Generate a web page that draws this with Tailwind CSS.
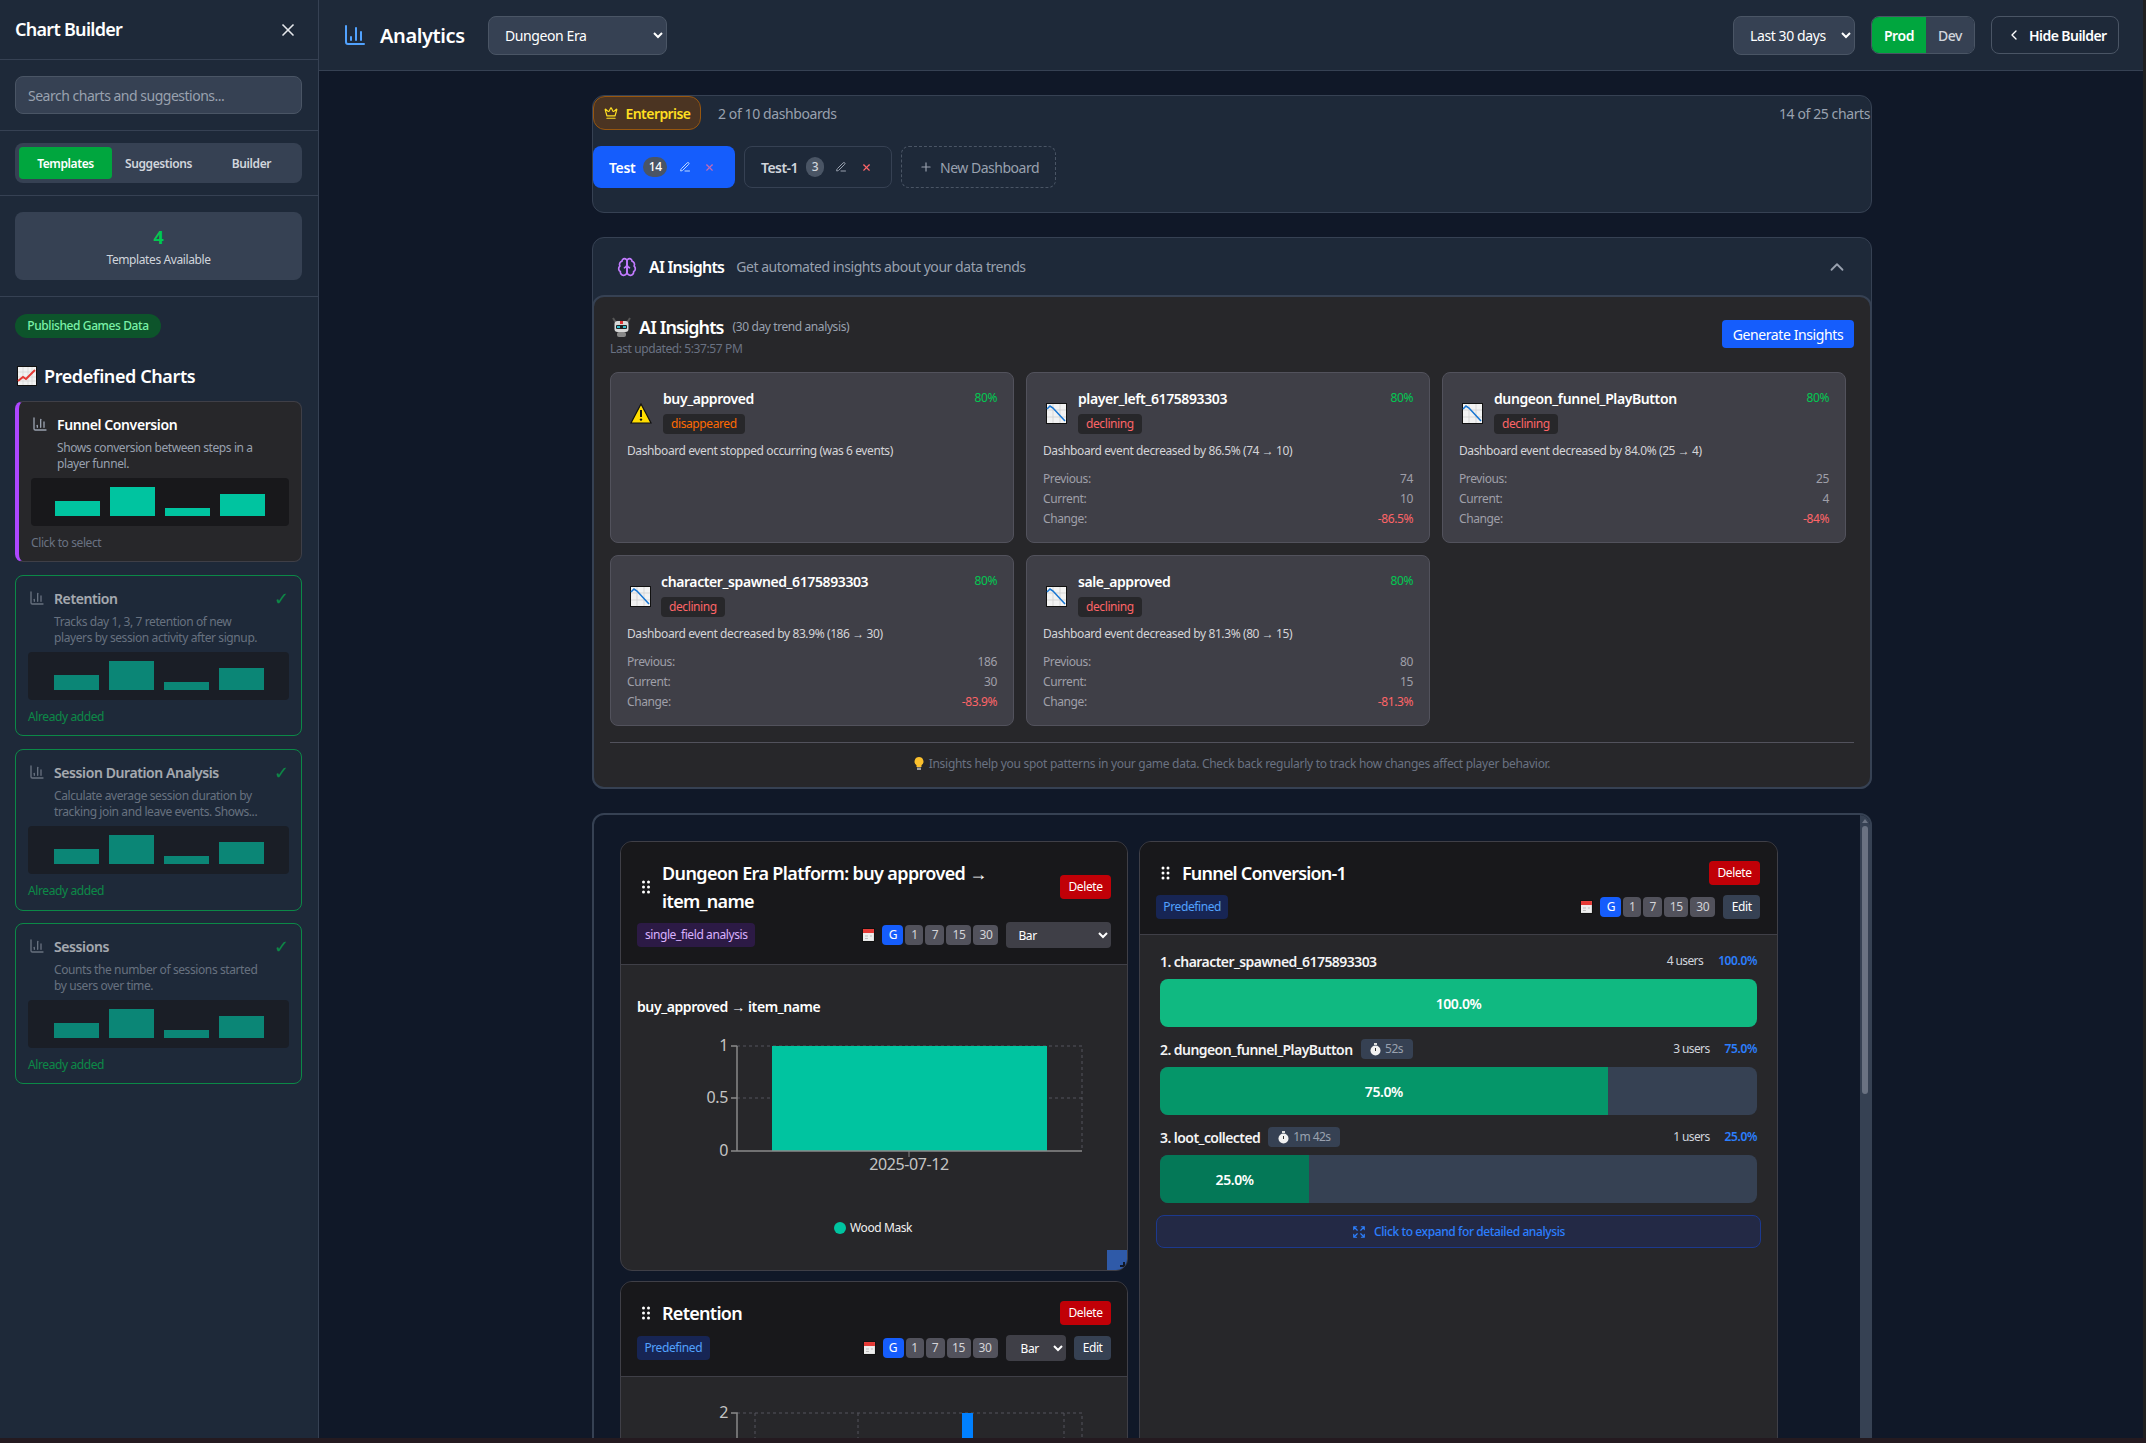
<!DOCTYPE html>
<html lang="en">
<head>
<meta charset="utf-8">
<title>Analytics</title>
<script src="https://cdn.jsdelivr.net/npm/@tailwindcss/browser@4"></script>
</head>
<body class="bg-[#241a20]">
<div class="flex flex-col w-[2146px] h-[1443px] overflow-hidden font-['Noto_Sans','Liberation_Sans',sans-serif] tracking-[-0.025em] text-white">
<div class="flex h-[1438px] overflow-hidden bg-gray-900">

<!-- SIDEBAR -->
<aside class="w-[319px] shrink-0 bg-gray-800 border-r border-gray-700 flex flex-col">
  <div class="h-[60px] shrink-0 border-b border-gray-700 flex items-center justify-between pl-[15px] pr-[20px]">
    <h2 class="text-[18px] font-semibold tracking-[-0.04em]">Chart Builder</h2>
    <svg class="w-[20px] h-[20px] text-gray-200" viewBox="0 0 24 24" fill="none" stroke="currentColor" stroke-width="2" stroke-linecap="round"><path d="M18 6 6 18"/><path d="m6 6 12 12"/></svg>
  </div>
  <div class="h-[71px] shrink-0 border-b border-gray-700 pl-[15px] pr-[16px] pt-[16px]">
    <div class="h-[38px] rounded-lg bg-gray-700 border border-gray-600 flex items-center px-[12px] text-[14px] text-gray-400 tracking-[-0.035em]">Search charts and suggestions...</div>
  </div>
  <div class="h-[65px] shrink-0 border-b border-gray-700 pl-[15px] pr-[16px] pt-[12px]">
    <div class="h-[40px] rounded-lg bg-gray-700 p-[4px] flex text-[12px] font-semibold">
      <div class="w-[93px] rounded bg-green-600 flex items-center justify-center pt-px">Templates</div>
      <div class="w-[93px] flex items-center justify-center text-gray-300 pt-px">Suggestions</div>
      <div class="w-[93px] flex items-center justify-center text-gray-300 pt-px">Builder</div>
    </div>
  </div>
  <div class="h-[101px] shrink-0 border-b border-gray-700 pl-[15px] pr-[16px] pt-[16px]">
    <div class="h-[68px] rounded-lg bg-gray-700 flex flex-col items-center justify-center">
      <div class="text-[18px] leading-[24px] font-bold text-green-500">4</div>
      <div class="mt-[3px] text-[12px] leading-[16px] text-gray-300">Templates Available</div>
    </div>
  </div>
  <div class="flex-1 pl-[15px] pr-[16px] pt-[17px]">
    <div class="flex h-[24px] w-[146px] items-center justify-center rounded-full bg-green-900 text-green-300 text-[12px] font-medium">Published Games Data</div>
    <div class="mt-[24px] h-[28px] flex items-center gap-[7px] text-[18px] font-semibold">
      <svg class="ml-[2px] w-[20px] h-[20px]" viewBox="0 0 20 20"><rect width="20" height="20" fill="#111"/><rect x="1" y="1" width="18" height="18" fill="#f2f2f2"/><path d="M1 6h18M1 11h18M1 15h18M6 1v18M11 1v18M15 1v18" stroke="#d0d0d0" stroke-width=".6"/><path d="M1 15l5-4 3 2 9-9" stroke="#e53935" stroke-width="2" fill="none"/></svg>
      <span>Predefined Charts</span>
    </div>

    <div class="mt-[11px] h-[161px] rounded-lg bg-zinc-800 border border-zinc-700 border-l-4 border-l-purple-500 p-[12px]">
      <div class="flex items-center gap-[9px] h-[20px]">
        <svg class="w-[16px] h-[16px] ml-px text-gray-400" viewBox="0 0 24 24" fill="none" stroke="currentColor" stroke-width="2" stroke-linecap="round"><path d="M3 3v16a2 2 0 0 0 2 2h16"/><path d="M18 17V9"/><path d="M13 17V5"/><path d="M8 17v-3"/></svg>
        <span class="text-[14px] font-semibold">Funnel Conversion</span>
      </div>
      <p class="ml-[26px] mt-[6px] text-[12px] leading-[16px] text-gray-400">Shows conversion between steps in a<br>player funnel.</p>
      <div class="mt-[6px] h-[48px] rounded bg-zinc-900 flex items-end justify-center gap-[10px] pb-[10px]">
        <div class="w-[45px] h-[15px] bg-[#00c4a0]"></div><div class="w-[45px] h-[29px] bg-[#00c4a0]"></div><div class="w-[45px] h-[8px] bg-[#00c4a0]"></div><div class="w-[45px] h-[22px] bg-[#00c4a0]"></div>
      </div>
      <p class="mt-[9px] text-[12px] leading-[16px] text-gray-500">Click to select</p>
    </div>

    <div class="mt-[13px] h-[161px] rounded-lg border border-green-500 p-[12px] opacity-60">
      <div class="flex items-center gap-[9px] h-[20px]">
        <svg class="w-[16px] h-[16px] ml-px text-gray-400" viewBox="0 0 24 24" fill="none" stroke="currentColor" stroke-width="2" stroke-linecap="round"><path d="M3 3v16a2 2 0 0 0 2 2h16"/><path d="M18 17V9"/><path d="M13 17V5"/><path d="M8 17v-3"/></svg>
        <span class="text-[14px] font-semibold flex-1">Retention</span>
        <span class="text-[18px] leading-[20px] text-green-500">✓</span>
      </div>
      <p class="ml-[26px] mt-[6px] text-[12px] leading-[16px] text-gray-400">Tracks day 1, 3, 7 retention of new<br>players by session activity after signup.</p>
      <div class="mt-[6px] h-[48px] rounded bg-zinc-900 flex items-end justify-center gap-[10px] pb-[10px]">
        <div class="w-[45px] h-[15px] bg-[#00c4a0]"></div><div class="w-[45px] h-[29px] bg-[#00c4a0]"></div><div class="w-[45px] h-[8px] bg-[#00c4a0]"></div><div class="w-[45px] h-[22px] bg-[#00c4a0]"></div>
      </div>
      <p class="mt-[9px] text-[12px] leading-[16px] text-green-500">Already added</p>
    </div>

    <div class="mt-[13px] h-[162px] rounded-lg border border-green-500 p-[12px] opacity-60">
      <div class="flex items-center gap-[9px] h-[20px]">
        <svg class="w-[16px] h-[16px] ml-px text-gray-400" viewBox="0 0 24 24" fill="none" stroke="currentColor" stroke-width="2" stroke-linecap="round"><path d="M3 3v16a2 2 0 0 0 2 2h16"/><path d="M18 17V9"/><path d="M13 17V5"/><path d="M8 17v-3"/></svg>
        <span class="text-[14px] font-semibold flex-1">Session Duration Analysis</span>
        <span class="text-[18px] leading-[20px] text-green-500">✓</span>
      </div>
      <p class="ml-[26px] mt-[6px] text-[12px] leading-[16px] text-gray-400">Calculate average session duration by<br>tracking join and leave events. Shows...</p>
      <div class="mt-[6px] h-[48px] rounded bg-zinc-900 flex items-end justify-center gap-[10px] pb-[10px]">
        <div class="w-[45px] h-[15px] bg-[#00c4a0]"></div><div class="w-[45px] h-[29px] bg-[#00c4a0]"></div><div class="w-[45px] h-[8px] bg-[#00c4a0]"></div><div class="w-[45px] h-[22px] bg-[#00c4a0]"></div>
      </div>
      <p class="mt-[9px] text-[12px] leading-[16px] text-green-500">Already added</p>
    </div>

    <div class="mt-[12px] h-[161px] rounded-lg border border-green-500 p-[12px] opacity-60">
      <div class="flex items-center gap-[9px] h-[20px]">
        <svg class="w-[16px] h-[16px] ml-px text-gray-400" viewBox="0 0 24 24" fill="none" stroke="currentColor" stroke-width="2" stroke-linecap="round"><path d="M3 3v16a2 2 0 0 0 2 2h16"/><path d="M18 17V9"/><path d="M13 17V5"/><path d="M8 17v-3"/></svg>
        <span class="text-[14px] font-semibold flex-1">Sessions</span>
        <span class="text-[18px] leading-[20px] text-green-500">✓</span>
      </div>
      <p class="ml-[26px] mt-[6px] text-[12px] leading-[16px] text-gray-400">Counts the number of sessions started<br>by users over time.</p>
      <div class="mt-[6px] h-[48px] rounded bg-zinc-900 flex items-end justify-center gap-[10px] pb-[10px]">
        <div class="w-[45px] h-[15px] bg-[#00c4a0]"></div><div class="w-[45px] h-[29px] bg-[#00c4a0]"></div><div class="w-[45px] h-[8px] bg-[#00c4a0]"></div><div class="w-[45px] h-[22px] bg-[#00c4a0]"></div>
      </div>
      <p class="mt-[9px] text-[12px] leading-[16px] text-green-500">Already added</p>
    </div>
  </div>
</aside>

<!-- MAIN -->
<main class="w-[1824px] shrink-0 flex flex-col overflow-hidden">
  <header class="h-[71px] shrink-0 bg-gray-800 border-b border-gray-700 flex items-center justify-between pl-[26px] pr-[24px]">
    <div class="flex items-center">
      <svg class="w-[24px] h-[24px] text-blue-400 -ml-[2px]" viewBox="0 0 24 24" fill="none" stroke="currentColor" stroke-width="2" stroke-linecap="round"><path d="M3 3v16a2 2 0 0 0 2 2h16"/><path d="M18 17V9"/><path d="M13 17V5"/><path d="M8 17v-3"/></svg>
      <h1 class="ml-[13px] pt-[2px] text-[20px] font-semibold w-[108px]">Analytics</h1>
      <select class="h-[39px] w-[179px] rounded-lg bg-gray-700 border border-gray-600 px-[12px] text-[14px] text-white"><option>Dungeon Era</option></select>
    </div>
    <div class="flex items-center">
      <select class="h-[39px] w-[122px] rounded-lg bg-gray-700 border border-gray-600 px-[12px] text-[14px] text-white"><option>Last 30 days</option></select>
      <div class="ml-[16px] h-[38px] w-[104px] rounded-lg overflow-hidden border border-gray-600 flex text-[14px]">
        <div class="w-[54px] bg-green-600 flex items-center justify-center font-semibold">Prod</div>
        <div class="flex-1 bg-gray-700 text-gray-300 flex items-center justify-center font-medium">Dev</div>
      </div>
      <div class="ml-[16px] h-[38px] w-[128px] rounded-lg border border-gray-600 flex items-center pl-[14px] gap-[7px] text-[14px] font-semibold tracking-[-0.04em]">
        <svg class="w-[16px] h-[16px]" viewBox="0 0 24 24" fill="none" stroke="currentColor" stroke-width="2" stroke-linecap="round" stroke-linejoin="round"><path d="m15 18-6-6 6-6"/></svg>
        <span>Hide Builder</span>
      </div>
    </div>
  </header>

  <div class="flex-1 overflow-hidden flex">
  <div class="w-[1821px] shrink-0 pt-[24px] pl-[273px]">
  <div class="w-[1280px]">

    <!-- dashboards -->
    <section class="h-[118px] rounded-xl bg-gray-800 border border-gray-700">
      <div class="flex items-center justify-between h-[34px] pr-[1px]">
        <div class="flex items-center">
          <div class="h-[34px] w-[108px] rounded-xl bg-[#4b3422] border border-[#97560f] flex items-center justify-center gap-[8px] text-[14px] font-semibold text-yellow-300 tracking-[-0.04em]">
            <svg class="w-[14px] h-[14px]" viewBox="0 0 24 24" fill="none" stroke="currentColor" stroke-width="2" stroke-linecap="round" stroke-linejoin="round"><path d="M11.562 3.266a.5.5 0 0 1 .876 0L15.39 8.87a1 1 0 0 0 1.516.294L21.183 5.5a.5.5 0 0 1 .798.519l-2.834 10.246a1 1 0 0 1-.956.734H5.81a1 1 0 0 1-.957-.734L2.02 6.02a.5.5 0 0 1 .798-.519l4.276 3.664a1 1 0 0 0 1.516-.294z"/><path d="M5 21h14"/></svg>
            <span>Enterprise</span>
          </div>
          <span class="ml-[17px] text-[14px] text-gray-400">2 of 10 dashboards</span>
        </div>
        <span class="text-[14px] text-gray-400">14 of 25 charts</span>
      </div>
      <div class="mt-[16px] flex gap-[9px] text-[14px] font-medium">
        <div class="h-[42px] w-[142px] rounded-lg bg-blue-600 flex items-center pl-[16px]">
          <span class="font-semibold">Test</span>
          <span class="ml-[8px] h-[20px] w-[24px] rounded-full bg-gray-600 flex items-center justify-center text-[12px]">14</span>
          <svg class="ml-[12px] w-[12px] h-[12px] text-blue-200" viewBox="0 0 24 24" fill="none" stroke="currentColor" stroke-width="2" stroke-linecap="round" stroke-linejoin="round"><path d="M12 20h9"/><path d="M16.376 3.622a1 1 0 0 1 3.002 3.002L7.368 18.635a2 2 0 0 1-.855.506l-2.872.838a.5.5 0 0 1-.62-.62l.838-2.872a2 2 0 0 1 .506-.854z"/></svg>
          <svg class="ml-[13px] w-[11px] h-[11px] text-[#c56bb5]" viewBox="0 0 24 24" fill="none" stroke="currentColor" stroke-width="2.5" stroke-linecap="round"><path d="M18 6 6 18"/><path d="m6 6 12 12"/></svg>
        </div>
        <div class="h-[42px] w-[148px] rounded-lg border border-gray-700 flex items-center pl-[16px] text-gray-300">
          <span class="font-semibold tracking-[-0.04em]">Test-1</span>
          <span class="ml-[8px] h-[20px] w-[18px] rounded-full bg-gray-600 flex items-center justify-center text-[12px]">3</span>
          <svg class="ml-[11px] w-[12px] h-[12px] text-gray-400" viewBox="0 0 24 24" fill="none" stroke="currentColor" stroke-width="2" stroke-linecap="round" stroke-linejoin="round"><path d="M12 20h9"/><path d="M16.376 3.622a1 1 0 0 1 3.002 3.002L7.368 18.635a2 2 0 0 1-.855.506l-2.872.838a.5.5 0 0 1-.62-.62l.838-2.872a2 2 0 0 1 .506-.854z"/></svg>
          <svg class="ml-[14px] w-[11px] h-[11px] text-red-400" viewBox="0 0 24 24" fill="none" stroke="currentColor" stroke-width="2.5" stroke-linecap="round"><path d="M18 6 6 18"/><path d="m6 6 12 12"/></svg>
        </div>
        <div class="h-[42px] w-[155px] rounded-lg border border-dashed border-gray-600 flex items-center pl-[17px] gap-[7px] text-gray-400 font-normal tracking-[-0.035em]">
          <svg class="w-[14px] h-[14px]" viewBox="0 0 24 24" fill="none" stroke="currentColor" stroke-width="2" stroke-linecap="round"><path d="M5 12h14"/><path d="M12 5v14"/></svg>
          <span>New Dashboard</span>
        </div>
      </div>
    </section>

    <!-- AI insights -->
    <section class="mt-[24px] rounded-xl bg-gray-800 border border-gray-700">
      <div class="h-[57px] flex items-center pl-[24px] pr-[23px]">
        <svg class="w-[20px] h-[20px] text-purple-400" viewBox="0 0 24 24" fill="none" stroke="currentColor" stroke-width="2" stroke-linecap="round" stroke-linejoin="round"><path d="M12 5a3 3 0 1 0-5.997.125 4 4 0 0 0-2.526 5.77 4 4 0 0 0 .556 6.588A4 4 0 1 0 12 18Z"/><path d="M12 5a3 3 0 1 1 5.997.125 4 4 0 0 1 2.526 5.77 4 4 0 0 1-.556 6.588A4 4 0 1 1 12 18Z"/><path d="M15 13a4.5 4.5 0 0 1-3-4 4.5 4.5 0 0 1-3 4"/><path d="M12 18v-9"/></svg>
        <span class="ml-[12px] text-[16px] font-semibold tracking-[-0.05em]">AI Insights</span>
        <span class="ml-[12px] text-[14px] text-gray-400 flex-1 tracking-[-0.032em]">Get automated insights about your data trends</span>
        <svg class="w-[22px] h-[22px] text-gray-400" viewBox="0 0 24 24" fill="none" stroke="currentColor" stroke-width="2" stroke-linecap="round" stroke-linejoin="round"><path d="m18 15-6-6-6 6"/></svg>
      </div>
      <div class="-mx-px -mb-px rounded-xl bg-zinc-800 border-2 border-gray-700 h-[494px] pt-[16px] px-[16px]">
        <div class="flex justify-between items-start h-[44px]">
          <div>
            <div class="flex items-center h-[28px]">
              <svg class="ml-[1px] w-[21px] h-[21px]" viewBox="0 0 21 21"><path d="M2 1l2.5 4M19 1l-2.500 4" stroke="#555" stroke-width="2"/><rect x="3.5" y="4" width="14" height="11" rx="3" fill="#d8d8d8"/><rect x="9" y="4" width="3" height="3" fill="#d33"/><rect x="5" y="8" width="11" height="4" rx="1" fill="#222"/><rect x="6" y="9" width="3" height="2" fill="#3bc"/><rect x="12" y="9" width="3" height="2" fill="#3bc"/><rect x="6" y="15" width="9" height="5" rx="2" fill="#888"/></svg>
              <span class="ml-[7px] text-[18px] font-semibold tracking-[-0.05em]">AI Insights</span>
              <span class="ml-[9px] text-[12px] text-gray-400">(30 day trend analysis)</span>
            </div>
            <div class="text-[12px] leading-[16px] text-gray-500">Last updated: 5:37:57 PM</div>
          </div>
          <div class="mt-[7px] h-[28px] w-[132px] rounded bg-blue-600 flex items-center justify-center text-[14px] font-normal">Generate Insights</div>
        </div>

        <div class="mt-[15px] pr-[8px] grid grid-cols-3 gap-[12px]">

          <div class="h-[171px] rounded-lg bg-zinc-700 border border-zinc-600 p-[16px]">
            <div class="flex items-start">
              <svg class="mt-[14px] ml-[3px] w-[22px] h-[21px] shrink-0" viewBox="0 0 22 21"><path d="M11 1 21 20H1Z" fill="#ffdd00" stroke="#111" stroke-width="1.2"/><path d="M11 7v7" stroke="#111" stroke-width="2"/><circle cx="11" cy="16.6" r="1.2" fill="#111"/></svg>
              <div class="ml-[11px] flex-1">
                <div class="text-[14px] leading-[20px] font-semibold">buy_approved</div>
                <div class="mt-[5px] flex w-fit h-[20px] items-center rounded bg-zinc-800 px-[8px] text-[12px] text-orange-500">disappeared</div>
              </div>
              <span class="mt-px text-[12px] leading-[16px] text-green-500">80%</span>
            </div>
            <p class="mt-[9px] text-[12px] leading-[16px] text-zinc-300">Dashboard event stopped occurring (was 6 events)</p>
          </div>

          <div class="h-[171px] rounded-lg bg-zinc-700 border border-zinc-600 p-[16px]">
            <div class="flex items-start">
              <svg class="mt-[14px] ml-[3px] w-[21px] h-[21px] shrink-0" viewBox="0 0 21 21"><rect width="21" height="21" fill="#111"/><rect x="1" y="1" width="19" height="19" fill="#f2f2f2"/><path d="M1 7h19M1 14h19M7 1v19M14 1v19" stroke="#cfcfcf" stroke-width=".7"/><path d="M1 6l3-3 3 2 12 13" stroke="#1976d2" stroke-width="1.6" fill="none"/></svg>
              <div class="ml-[11px] flex-1">
                <div class="text-[14px] leading-[20px] font-semibold">player_left_6175893303</div>
                <div class="mt-[5px] flex w-fit h-[20px] items-center rounded bg-zinc-800 px-[8px] text-[12px] text-red-400">declining</div>
              </div>
              <span class="mt-px text-[12px] leading-[16px] text-green-500">80%</span>
            </div>
            <p class="mt-[9px] text-[12px] leading-[16px] text-zinc-300">Dashboard event decreased by 86.5% (74 → 10)</p>
            <div class="mt-[10px] text-[12px] leading-[20px] text-zinc-400">
              <div class="flex justify-between"><span>Previous:</span><span>74</span></div>
              <div class="flex justify-between"><span>Current:</span><span>10</span></div>
              <div class="flex justify-between"><span>Change:</span><span class="text-red-400">-86.5%</span></div>
            </div>
          </div>

          <div class="h-[171px] rounded-lg bg-zinc-700 border border-zinc-600 p-[16px]">
            <div class="flex items-start">
              <svg class="mt-[14px] ml-[3px] w-[21px] h-[21px] shrink-0" viewBox="0 0 21 21"><rect width="21" height="21" fill="#111"/><rect x="1" y="1" width="19" height="19" fill="#f2f2f2"/><path d="M1 7h19M1 14h19M7 1v19M14 1v19" stroke="#cfcfcf" stroke-width=".7"/><path d="M1 6l3-3 3 2 12 13" stroke="#1976d2" stroke-width="1.6" fill="none"/></svg>
              <div class="ml-[11px] flex-1">
                <div class="text-[14px] leading-[20px] font-semibold">dungeon_funnel_PlayButton</div>
                <div class="mt-[5px] flex w-fit h-[20px] items-center rounded bg-zinc-800 px-[8px] text-[12px] text-red-400">declining</div>
              </div>
              <span class="mt-px text-[12px] leading-[16px] text-green-500">80%</span>
            </div>
            <p class="mt-[9px] text-[12px] leading-[16px] text-zinc-300">Dashboard event decreased by 84.0% (25 → 4)</p>
            <div class="mt-[10px] text-[12px] leading-[20px] text-zinc-400">
              <div class="flex justify-between"><span>Previous:</span><span>25</span></div>
              <div class="flex justify-between"><span>Current:</span><span>4</span></div>
              <div class="flex justify-between"><span>Change:</span><span class="text-red-400">-84%</span></div>
            </div>
          </div>

          <div class="h-[171px] rounded-lg bg-zinc-700 border border-zinc-600 p-[16px]">
            <div class="flex items-start">
              <svg class="mt-[14px] ml-[3px] w-[21px] h-[21px] shrink-0" viewBox="0 0 21 21"><rect width="21" height="21" fill="#111"/><rect x="1" y="1" width="19" height="19" fill="#f2f2f2"/><path d="M1 7h19M1 14h19M7 1v19M14 1v19" stroke="#cfcfcf" stroke-width=".7"/><path d="M1 6l3-3 3 2 12 13" stroke="#1976d2" stroke-width="1.6" fill="none"/></svg>
              <div class="ml-[10px] flex-1">
                <div class="text-[14px] leading-[20px] font-semibold">character_spawned_6175893303</div>
                <div class="mt-[5px] flex w-fit h-[20px] items-center rounded bg-zinc-800 px-[8px] text-[12px] text-red-400">declining</div>
              </div>
              <span class="mt-px text-[12px] leading-[16px] text-green-500">80%</span>
            </div>
            <p class="mt-[9px] text-[12px] leading-[16px] text-zinc-300">Dashboard event decreased by 83.9% (186 → 30)</p>
            <div class="mt-[10px] text-[12px] leading-[20px] text-zinc-400">
              <div class="flex justify-between"><span>Previous:</span><span>186</span></div>
              <div class="flex justify-between"><span>Current:</span><span>30</span></div>
              <div class="flex justify-between"><span>Change:</span><span class="text-red-400">-83.9%</span></div>
            </div>
          </div>

          <div class="h-[171px] rounded-lg bg-zinc-700 border border-zinc-600 p-[16px]">
            <div class="flex items-start">
              <svg class="mt-[14px] ml-[3px] w-[21px] h-[21px] shrink-0" viewBox="0 0 21 21"><rect width="21" height="21" fill="#111"/><rect x="1" y="1" width="19" height="19" fill="#f2f2f2"/><path d="M1 7h19M1 14h19M7 1v19M14 1v19" stroke="#cfcfcf" stroke-width=".7"/><path d="M1 6l3-3 3 2 12 13" stroke="#1976d2" stroke-width="1.6" fill="none"/></svg>
              <div class="ml-[11px] flex-1">
                <div class="text-[14px] leading-[20px] font-semibold">sale_approved</div>
                <div class="mt-[5px] flex w-fit h-[20px] items-center rounded bg-zinc-800 px-[8px] text-[12px] text-red-400">declining</div>
              </div>
              <span class="mt-px text-[12px] leading-[16px] text-green-500">80%</span>
            </div>
            <p class="mt-[9px] text-[12px] leading-[16px] text-zinc-300">Dashboard event decreased by 81.3% (80 → 15)</p>
            <div class="mt-[10px] text-[12px] leading-[20px] text-zinc-400">
              <div class="flex justify-between"><span>Previous:</span><span>80</span></div>
              <div class="flex justify-between"><span>Current:</span><span>15</span></div>
              <div class="flex justify-between"><span>Change:</span><span class="text-red-400">-81.3%</span></div>
            </div>
          </div>
        </div>

        <div class="mt-[16px] border-t border-zinc-600 pt-[13px] flex items-center justify-center gap-[5px] text-[12px] leading-[16px] text-gray-500 tracking-[-0.024em]">
          <svg class="w-[10px] h-[14px]" viewBox="0 0 10 14"><path d="M5 0a4.5 4.5 0 0 0-2.5 8.2V10h5V8.2A4.5 4.5 0 0 0 5 0Z" fill="#fbc02d"/><rect x="3" y="10.5" width="4" height="2.5" fill="#9e9e9e"/></svg>
          <span>Insights help you spot patterns in your game data. Check back regularly to track how changes affect player behavior.</span>
        </div>
      </div>
    </section>

    <!-- chart grid -->
    <section class="mt-[24px] relative h-[640px] rounded-t-xl border-2 border-gray-700 overflow-hidden pl-[26px] pt-[26px] flex gap-[11px]">
      <!-- scrollbar -->
      <div class="absolute top-0 right-0 w-[10px] h-full bg-gray-700">
        <div class="mx-auto mt-[4px] w-0 h-0 border-x-[3px] border-x-transparent border-b-[4px] border-b-gray-500"></div>
        <div class="mx-auto mt-[3px] w-[6px] h-[268px] rounded-sm bg-gray-500"></div>
      </div>

      <div class="w-[508px] shrink-0 flex flex-col gap-[10px]">
        <!-- card A -->
        <article class="h-[430px] shrink-0 relative rounded-xl border border-zinc-700 bg-zinc-800 overflow-hidden">
          <div class="h-[123px] bg-zinc-900 border-b border-zinc-700 px-[16px] pt-[16px]">
            <div class="flex items-center justify-between h-[57px]">
              <div class="flex items-center">
                <svg class="w-[25px] h-[14px] shrink-0 text-white" viewBox="0 0 25 14" fill="currentColor"><circle cx="6.5" cy="2" r="1.5"/><circle cx="11.5" cy="2" r="1.5"/><circle cx="6.5" cy="7" r="1.5"/><circle cx="11.5" cy="7" r="1.5"/><circle cx="6.5" cy="12" r="1.5"/><circle cx="11.5" cy="12" r="1.5"/></svg>
                <h3 class="w-[360px] text-[18px] leading-[28px] font-semibold tracking-[-0.035em]">Dungeon Era Platform: buy approved → item_name</h3>
              </div>
              <button class="h-[24px] w-[51px] rounded bg-red-700 text-[12px]">Delete</button>
            </div>
            <div class="mt-[7px] flex items-center h-[26px]">
              <span class="h-[24px] w-[119px] rounded bg-[#2c1a45] text-purple-300 text-[12px] flex items-center justify-center">single_field analysis</span>
              <svg class="ml-[107px] w-[13px] h-[14px]" viewBox="0 0 13 14"><rect width="13" height="14" fill="#111"/><rect x="1" y="1" width="11" height="12" fill="#eee"/><rect x="1" y="1" width="11" height="4" fill="#e53935"/><path d="M3 8h3M8 8h2M3 10.500h3" stroke="#bbb"/></svg>
              <div class="ml-[7px] flex gap-[2px] text-[12px] text-zinc-300">
                <span class="h-[20px] w-[21px] rounded bg-blue-600 text-white flex items-center justify-center">G</span>
                <span class="h-[20px] w-[18px] rounded bg-zinc-600 flex items-center justify-center">1</span>
                <span class="h-[20px] w-[19px] rounded bg-zinc-600 flex items-center justify-center">7</span>
                <span class="h-[20px] w-[25px] rounded bg-zinc-600 flex items-center justify-center">15</span>
                <span class="h-[20px] w-[25px] rounded bg-zinc-600 flex items-center justify-center">30</span>
              </div>
              <select class="ml-[8px] h-[26px] w-[105px] rounded bg-zinc-700 px-[8px] text-[12px] text-white"><option>Bar</option></select>
            </div>
          </div>
          <div class="px-[16px] pt-[32px] text-[14px] leading-[20px] font-semibold">buy_approved → item_name</div>
          <svg class="absolute left-0 top-[183px]" width="506" height="240" viewBox="0 0 506 240">
            <path d="M116 21H461V126M116 73H461" fill="none" stroke="#55555c" stroke-dasharray="3 3"/>
            <rect x="151" y="21" width="275" height="105" fill="#00c4a0"/>
            <path d="M116 21V126H461M110 21H116M110 73H116M110 126H116" fill="none" stroke="#8a8a8a" stroke-width="1.500"/>
            <path d="M288 126V132" stroke="#8a8a8a"/>
            <g fill="#c4c4c4" font-size="16" font-family="Noto Sans, sans-serif">
              <text x="107" y="26" text-anchor="end">1</text>
              <text x="107" y="78" text-anchor="end">0.5</text>
              <text x="107" y="131" text-anchor="end">0</text>
              <text x="288" y="145" text-anchor="middle">2025-07-12</text>
            </g>
            <circle cx="219" cy="203" r="6" fill="#00c4a0"/>
            <text x="229" y="207" fill="#f0f0f0" font-size="12" font-family="Noto Sans, sans-serif">Wood Mask</text>
          </svg>
          <div class="absolute right-0 bottom-0 w-[20px] h-[20px] bg-[#2f5aa8]">
            <div class="absolute right-[2px] bottom-[3px] w-[5px] h-[5px] border-r-2 border-b-2 border-gray-900"></div>
          </div>
        </article>

        <!-- card B -->
        <article class="h-[400px] shrink-0 relative rounded-xl border border-zinc-700 bg-zinc-800 overflow-hidden">
          <div class="h-[95px] bg-zinc-900 border-b border-zinc-700 px-[16px] pt-[17px]">
            <div class="flex items-center justify-between h-[28px]">
              <div class="flex items-center">
                <svg class="w-[25px] h-[14px] shrink-0 text-white" viewBox="0 0 25 14" fill="currentColor"><circle cx="6.5" cy="2" r="1.5"/><circle cx="11.5" cy="2" r="1.5"/><circle cx="6.5" cy="7" r="1.5"/><circle cx="11.5" cy="7" r="1.5"/><circle cx="6.5" cy="12" r="1.5"/><circle cx="11.5" cy="12" r="1.5"/></svg>
                <h3 class="text-[18px] leading-[28px] font-semibold tracking-[-0.04em]">Retention</h3>
              </div>
              <button class="h-[24px] w-[51px] rounded bg-red-700 text-[12px]">Delete</button>
            </div>
            <div class="mt-[8px] flex items-center h-[26px]">
              <span class="h-[24px] w-[73px] rounded bg-[#172554] text-blue-400 text-[12px] flex items-center justify-center">Predefined</span>
              <svg class="ml-[153px] w-[13px] h-[14px]" viewBox="0 0 13 14"><rect width="13" height="14" fill="#111"/><rect x="1" y="1" width="11" height="12" fill="#eee"/><rect x="1" y="1" width="11" height="4" fill="#e53935"/><path d="M3 8h3M8 8h2M3 10.500h3" stroke="#bbb"/></svg>
              <div class="ml-[7px] flex gap-[2px] text-[12px] text-zinc-300">
                <span class="h-[20px] w-[21px] rounded bg-blue-600 text-white flex items-center justify-center">G</span>
                <span class="h-[20px] w-[18px] rounded bg-zinc-600 flex items-center justify-center">1</span>
                <span class="h-[20px] w-[19px] rounded bg-zinc-600 flex items-center justify-center">7</span>
                <span class="h-[20px] w-[24px] rounded bg-zinc-600 flex items-center justify-center">15</span>
                <span class="h-[20px] w-[25px] rounded bg-zinc-600 flex items-center justify-center">30</span>
              </div>
              <select class="ml-[8px] h-[26px] w-[61px] rounded bg-zinc-700 pl-[11px] text-[12px] text-white"><option>Bar</option></select>
              <span class="ml-[8px] h-[24px] w-[37px] rounded bg-gray-700 text-[12px] flex items-center justify-center">Edit</span>
            </div>
          </div>
          <svg class="absolute left-0 top-[110px]" width="506" height="100" viewBox="0 0 506 100">
            <path d="M116 21H461V100M134 21V100M237 21V100M443 21V100M116 60H461" fill="none" stroke="#55555c" stroke-dasharray="3 3"/>
            <rect x="341" y="21" width="11" height="79" fill="#0080ff"/>
            <path d="M110 21H116V100" fill="none" stroke="#8a8a8a" stroke-width="1.500"/>
            <text x="107" y="26" text-anchor="end" fill="#c4c4c4" font-size="16" font-family="Noto Sans, sans-serif">2</text>
          </svg>
        </article>
      </div>

      <!-- card C -->
      <article class="w-[639px] h-[640px] shrink-0 rounded-xl border border-zinc-700 bg-zinc-800 overflow-hidden">
        <div class="h-[93px] bg-zinc-900 border-b border-zinc-700 px-[16px] pt-[17px]">
          <div class="flex items-center justify-between h-[28px] pr-px">
            <div class="flex items-center">
              <svg class="w-[26px] h-[14px] shrink-0 text-white" viewBox="0 0 25 14" fill="currentColor"><circle cx="6.5" cy="2" r="1.5"/><circle cx="11.5" cy="2" r="1.5"/><circle cx="6.5" cy="7" r="1.5"/><circle cx="11.5" cy="7" r="1.5"/><circle cx="6.5" cy="12" r="1.5"/><circle cx="11.5" cy="12" r="1.5"/></svg>
              <h3 class="text-[18px] leading-[28px] font-semibold tracking-[-0.045em]">Funnel Conversion-1</h3>
            </div>
            <button class="h-[24px] w-[51px] rounded bg-red-700 text-[12px]">Delete</button>
          </div>
          <div class="mt-[8px] flex items-center h-[24px] pr-px">
            <span class="h-[24px] w-[73px] rounded bg-[#172554] text-blue-400 text-[12px] flex items-center justify-center">Predefined</span>
            <svg class="ml-[352px] w-[13px] h-[14px]" viewBox="0 0 13 14"><rect width="13" height="14" fill="#111"/><rect x="1" y="1" width="11" height="12" fill="#eee"/><rect x="1" y="1" width="11" height="4" fill="#e53935"/><path d="M3 8h3M8 8h2M3 10.500h3" stroke="#bbb"/></svg>
            <div class="ml-[7px] flex gap-[2px] text-[12px] text-zinc-300">
              <span class="h-[20px] w-[21px] rounded bg-blue-600 text-white flex items-center justify-center">G</span>
              <span class="h-[20px] w-[18px] rounded bg-zinc-600 flex items-center justify-center">1</span>
              <span class="h-[20px] w-[19px] rounded bg-zinc-600 flex items-center justify-center">7</span>
              <span class="h-[20px] w-[24px] rounded bg-zinc-600 flex items-center justify-center">15</span>
              <span class="h-[20px] w-[25px] rounded bg-zinc-600 flex items-center justify-center">30</span>
            </div>
            <span class="ml-[8px] h-[24px] w-[37px] rounded bg-gray-700 text-[12px] flex items-center justify-center">Edit</span>
          </div>
        </div>
        <div class="pl-[20px] pr-[20px] pt-[16px]">
          <div class="h-[20px] flex items-center justify-between">
            <span class="text-[14px] font-semibold tracking-[-0.04em] text-zinc-100">1. character_spawned_6175893303</span>
            <span class="flex items-center text-[12px]"><span class="text-gray-300 tracking-[-0.05em]">4 users</span><span class="ml-[15px] font-semibold text-blue-500">100.0%</span></span>
          </div>
          <div class="mt-[8px] h-[48px] rounded-lg bg-gray-700 overflow-hidden">
            <div class="h-full w-full bg-[#10b981] flex items-center justify-center text-[14px] font-semibold">100.0%</div>
          </div>
          <div class="mt-[12px] h-[20px] flex items-center justify-between">
            <span class="flex items-center text-[14px] font-semibold tracking-[-0.04em] text-zinc-100">2. dungeon_funnel_PlayButton
              <span class="ml-[8px] h-[20px] w-[52px] rounded bg-gray-700 text-[12px] font-normal text-gray-400 flex items-center justify-center gap-[4px]"><svg class="w-[11px] h-[13px]" viewBox="0 0 11 13"><rect x="4" y="0" width="3" height="2" fill="#ddd"/><circle cx="5.500" cy="7.500" r="5" fill="#f2f2f2"/><path d="M5.500 5v3" stroke="#333"/></svg>52s</span>
            </span>
            <span class="flex items-center text-[12px]"><span class="text-gray-300 tracking-[-0.05em]">3 users</span><span class="ml-[15px] font-semibold text-blue-500">75.0%</span></span>
          </div>
          <div class="mt-[8px] h-[48px] rounded-lg bg-gray-700 overflow-hidden">
            <div class="h-full w-[75%] bg-[#059669] flex items-center justify-center text-[14px] font-semibold">75.0%</div>
          </div>
          <div class="mt-[12px] h-[20px] flex items-center justify-between">
            <span class="flex items-center text-[14px] font-semibold tracking-[-0.04em] text-zinc-100">3. loot_collected
              <span class="ml-[8px] h-[20px] w-[72px] rounded bg-gray-700 text-[12px] font-normal text-gray-400 flex items-center justify-center gap-[4px]"><svg class="w-[11px] h-[13px]" viewBox="0 0 11 13"><rect x="4" y="0" width="3" height="2" fill="#ddd"/><circle cx="5.500" cy="7.500" r="5" fill="#f2f2f2"/><path d="M5.500 5v3" stroke="#333"/></svg>1m 42s</span>
            </span>
            <span class="flex items-center text-[12px]"><span class="text-gray-300 tracking-[-0.05em]">1 users</span><span class="ml-[15px] font-semibold text-blue-500">25.0%</span></span>
          </div>
          <div class="mt-[8px] h-[48px] rounded-lg bg-gray-700 overflow-hidden">
            <div class="h-full w-[25%] bg-[#047857] flex items-center justify-center text-[14px] font-semibold">25.0%</div>
          </div>
          <div class="-mx-[4px] mt-[12px] h-[33px] rounded-lg bg-[#232945] border border-blue-900 flex items-center justify-center gap-[8px] text-[12px] font-medium text-blue-500">
            <svg class="w-[14px] h-[14px]" viewBox="0 0 24 24" fill="none" stroke="currentColor" stroke-width="2" stroke-linecap="round" stroke-linejoin="round"><path d="m21 21-6-6m6 6v-4.800m0 4.800h-4.800"/><path d="M3 16.200V21m0 0h4.800M3 21l6-6"/><path d="M21 7.800V3m0 0h-4.800M21 3l-6 6"/><path d="M3 7.800V3m0 0h4.800M3 3l6 6"/></svg>
            <span>Click to expand for detailed analysis</span>
          </div>
        </div>
      </article>
    </section>
  </div>
  </div>
  </div>
</main>
<div class="w-[3px] shrink-0 bg-[#1f1f1f]"></div>
</div>
</div>
</body>
</html>
